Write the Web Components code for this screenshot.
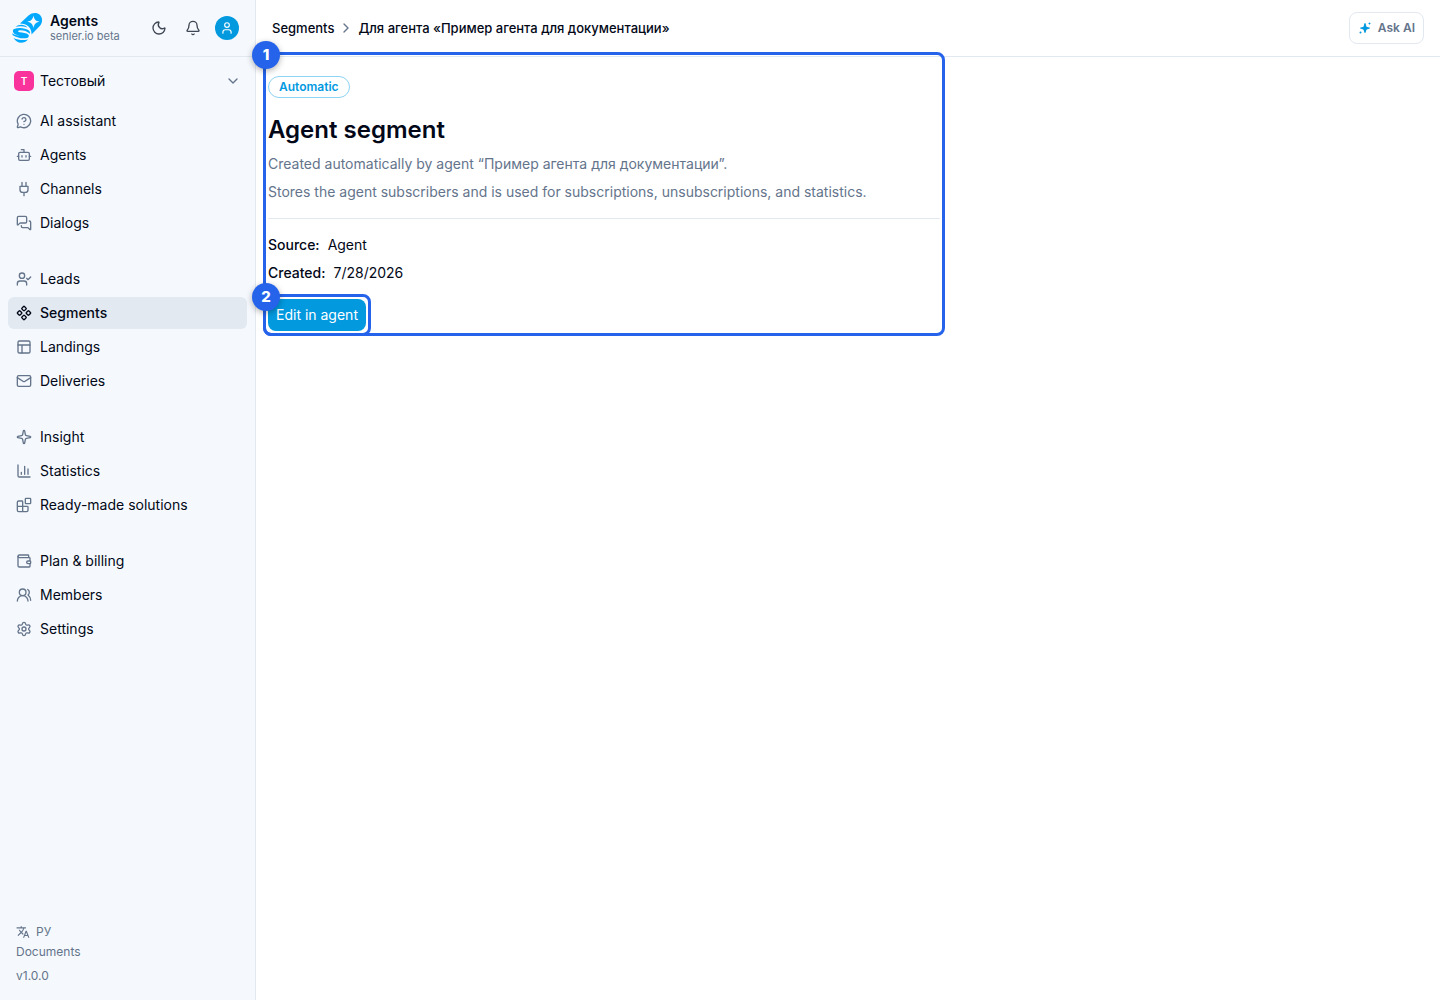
<!DOCTYPE html>
<html lang="en">
<head>
<meta charset="utf-8">
<meta name="viewport" content="width=device-width, initial-scale=1">
<title>Segments</title>
<style>
  :root {
    --ink: #020817;
    --muted: #64748b;
    --line: #e2e8f0;
    --accent: #0299df;
    --side: #f5f9fd;
    --mark: #2563eb;
  }
  body {
    margin: 0;
    font: 14px/20px Inter, "Noto Sans", sans-serif;
    color: var(--ink);
    background: white;
  }
</style>
</head>
<body>
<app-shell>
  <side-bar slot="side"></side-bar>
  <top-bar slot="top"></top-bar>
  <segment-card></segment-card>
</app-shell>

<script>
const ICONS = {
  help: '<path d="M2.992 16.342a2 2 0 0 1 .094 1.167l-1.065 3.29a1 1 0 0 0 1.236 1.168l3.413-.998a2 2 0 0 1 1.099.092 10 10 0 1 0-4.777-4.719"/><path d="M9.09 9a3 3 0 0 1 5.83 1c0 2-3 3-3 3M12 17h.01"/>',
  bot: '<path d="M12 8V4H8"/><rect width="16" height="12" x="4" y="8" rx="2"/><path d="M2 14h2M20 14h2M15 13v2M9 13v2"/>',
  plug: '<path d="M12 22v-5M9 8V2M15 8V2M18 8v5a4 4 0 0 1-4 4h-4a4 4 0 0 1-4-4V8Z"/>',
  dialogs: '<path d="M16 10a2 2 0 0 1-2 2H6.828a2 2 0 0 0-1.414.586l-2.202 2.202A.71.71 0 0 1 2 14.286V4a2 2 0 0 1 2-2h10a2 2 0 0 1 2 2z"/><path d="M20 9a2 2 0 0 1 2 2v10.286a.71.71 0 0 1-1.212.502l-2.202-2.202A2 2 0 0 0 17.172 19H10a2 2 0 0 1-2-2v-1"/>',
  lead: '<path d="m16 11 2 2 4-4M16 21v-2a4 4 0 0 0-4-4H6a4 4 0 0 0-4 4v2"/><circle cx="9" cy="7" r="4"/>',
  segments: '<g id="g"><path d="M15.536 11.293a1 1 0 0 0 0 1.414l2.376 2.377a1 1 0 0 0 1.414 0l2.377-2.377a1 1 0 0 0 0-1.414l-2.377-2.377a1 1 0 0 0-1.414 0z"/></g><use href="#g" transform="rotate(90 12 12)"/><use href="#g" transform="rotate(180 12 12)"/><use href="#g" transform="rotate(270 12 12)"/>',
  layout: '<rect width="18" height="18" x="3" y="3" rx="2"/><path d="M3 9h18M9 21V9"/>',
  mail: '<path d="m22 7-8.991 5.727a2 2 0 0 1-2.009 0L2 7"/><rect width="20" height="16" x="2" y="4" rx="2"/>',
  sparkle: '<path d="M11.017 2.814a1 1 0 0 1 1.966 0l1.051 5.558a2 2 0 0 0 1.594 1.594l5.558 1.051a1 1 0 0 1 0 1.966l-5.558 1.051a2 2 0 0 0-1.594 1.594l-1.051 5.558a1 1 0 0 1-1.966 0l-1.051-5.558a2 2 0 0 0-1.594-1.594l-5.558-1.051a1 1 0 0 1 0-1.966l5.558-1.051a2 2 0 0 0 1.594-1.594z"/>',
  chart: '<path d="M3 3v16a2 2 0 0 0 2 2h16M18 17V9M13 17V5M8 17v-3"/>',
  blocks: '<path d="M10 22V7a1 1 0 0 0-1-1H4a2 2 0 0 0-2 2v12a2 2 0 0 0 2 2h12a2 2 0 0 0 2-2v-5a1 1 0 0 0-1-1H2"/><rect x="14" y="2" width="8" height="8" rx="1"/>',
  wallet: '<path d="M19 7V4a1 1 0 0 0-1-1H5a2 2 0 0 0 0 4h15a1 1 0 0 1 1 1v4h-3a2 2 0 0 0 0 4h3a1 1 0 0 0 1-1v-2a1 1 0 0 0-1-1"/><path d="M3 5v14a2 2 0 0 0 2 2h15a1 1 0 0 0 1-1v-4"/>',
  members: '<path d="M18 21a8 8 0 0 0-16 0"/><circle cx="10" cy="8" r="5"/><path d="M22 20c0-3.37-2-6.5-4-8a5 5 0 0 0-.45-8.3"/>',
  settings: '<path d="M9.671 4.136a2.34 2.34 0 0 1 4.659 0 2.34 2.34 0 0 0 3.319 1.915 2.34 2.34 0 0 1 2.33 4.033 2.34 2.34 0 0 0 0 3.831 2.34 2.34 0 0 1-2.33 4.033 2.34 2.34 0 0 0-3.319 1.915 2.34 2.34 0 0 1-4.659 0 2.34 2.34 0 0 0-3.32-1.915 2.34 2.34 0 0 1-2.33-4.033 2.34 2.34 0 0 0 0-3.831A2.34 2.34 0 0 1 6.35 6.051a2.34 2.34 0 0 0 3.319-1.915"/><circle cx="12" cy="12" r="3"/>',
  moon: '<path d="M20.985 12.486a9 9 0 1 1-9.473-9.472c.405-.022.617.46.402.803a6 6 0 0 0 8.268 8.268c.344-.215.825-.004.803.401"/>',
  bell: '<path d="M10.268 21a2 2 0 0 0 3.464 0M3.262 15.326A1 1 0 0 0 4 17h16a1 1 0 0 0 .74-1.673C19.41 13.956 18 12.499 18 8A6 6 0 0 0 6 8c0 4.499-1.411 5.956-2.738 7.326"/>',
  user: '<path d="M19 21v-2a4 4 0 0 0-4-4H9a4 4 0 0 0-4 4v2"/><circle cx="12" cy="7" r="4"/>',
  down: '<path d="m6 9 6 6 6-6"/>',
  right: '<path d="m9 18 6-6-6-6"/>',
  translate: '<path fill="currentColor" stroke="none" d="M12.87 15.07l-2.54-2.51.03-.03A17.52 17.52 0 0 0 14.07 6H17V4h-7V2H8v2H1v2h11.17C11.5 7.92 10.44 9.75 9 11.35 8.07 10.32 7.3 9.19 6.69 8h-2c.73 1.63 1.73 3.17 2.98 4.56l-5.09 5.02L4 19l5-5 3.11 3.11.76-2.04zM18.5 10h-2L12 22h2l1.12-3h4.75L21 22h2l-4.5-12zm-2.62 7l1.62-4.33L19.12 17h-3.24z"/>',
  ai: '<g fill="currentColor" stroke="none"><path d="M12 2q1 0 1.400 1.500L14.500 8q.4 1.500 2 2l4 1q1.500.4 1.500 1.200t-1.500 1.200l-4 1q-1.600.5-2 2l-1.100 4.100Q13 22 12 22t-1.400-1.500l-1.100-4.100q-.4-1.500-2-2l-4-1Q2 13 2 12.200T3.500 11l4-1q1.600-.5 2-2l1.100-4.500Q11 2 12 2z"/><path d="m21 0 .8 2.200L24 3l-2.200.8L21 6l-.8-2.200L18 3l2.200-.8z"/><circle cx="3" cy="21" r="2"/></g>'
};

// <ui-icon name="bell" size="16">
class UiIcon extends HTMLElement {
  constructor() {
    super();
    this.attachShadow({ mode: "open" });
  }

  connectedCallback() {
    const size = this.getAttribute("size") || 16;
    this.shadowRoot.innerHTML = `
      <style>
        :host { display: block; flex: none; }
        svg { display: block; }
      </style>
      <svg width="${size}" height="${size}" viewBox="0 0 24 24" fill="none" stroke="currentColor"
        stroke-width="2" stroke-linecap="round" stroke-linejoin="round" aria-hidden="true">${ICONS[this.getAttribute("name")]}</svg>
    `;
  }
}

class AppShell extends HTMLElement {
  constructor() {
    super();
    this.attachShadow({ mode: "open" });
    this.shadowRoot.innerHTML = `
      <style>
        :host {
          display: grid;
          grid-template-columns: 256px minmax(0, 1fr);
          min-height: 100vh;
        }
        .page { display: flex; flex-direction: column; }
        main { padding: 0 12px; }
      </style>
      <slot name="side"></slot>
      <div class="page">
        <slot name="top"></slot>
        <main><slot></slot></main>
      </div>
    `;
  }
}

class NavItem extends HTMLElement {
  constructor() {
    super();
    this.attachShadow({ mode: "open" });
  }

  connectedCallback() {
    this.shadowRoot.innerHTML = `
      <style>
        :host { display: block; }
        a {
          display: flex;
          align-items: center;
          gap: 8px;
          height: 32px;
          padding: 0 8px;
          border-radius: 6px;
          color: var(--ink);
          text-decoration: none;
        }
        ui-icon { color: var(--muted); }
        :host([active]) a { background: #e2e9f1; font-weight: 500; }
        :host([active]) ui-icon { color: inherit; }
      </style>
      <a href="#"><ui-icon name="${this.getAttribute("icon")}"></ui-icon><slot></slot></a>
    `;
  }
}

class BrandLogo extends HTMLElement {
  constructor() {
    super();
    this.attachShadow({ mode: "open" });
    this.shadowRoot.innerHTML = `
      <style>
        :host { display: block; flex: none; }
        svg { display: block; }
      </style>
      <svg width="30" height="30" viewBox="0 0 30 30" aria-hidden="true">
        <path fill="#03a9ff" d="M8 10.500 16.500 2.500C20-.5 25-.8 28 2s2.500 8-.2 11L19.500 21.500C20 15 15 10.500 8 10.500z"/>
        <path fill="#f5f9fd" d="M21.500 2.500c.8 4 2 5.300 6 6.200-4 .9-5.200 2.200-6 6.200-.9-4-2.200-5.300-6.200-6.200 4-.9 5.300-2.200 6.200-6.200z"/>
        <circle cx="9" cy="21" r="10" fill="#f5f9fd"/>
        <path fill="#03a9ff" d="M3.500 13.800C7 11 12.500 11 15.500 14.500c-4-1.500-8-1.700-12-.7z"/>
        <path fill="#03a9ff" d="M1.500 16.300c5-2 11.500-1.500 15.800 1.500.6 1 .8 2 .7 3-3-2.600-6-3.600-9.500-3.600-2.500 0-3.500 1.400-.8 2 2.800.5 6.800.6 8.500 2.300 1.300 1.400.5 3-1.200 3.500-4.500 1-10-.2-14.200-2.800L0 20.300c2.500 1.700 5 2.400 8.300 2.600-3.300-.8-6.500-1.800-7.300-3.900-.3-1-.1-1.900.5-2.700z"/>
        <path fill="#03a9ff" d="M1.500 25c4.500 2 9.500 2.600 14.500 1.500-4 4.500-11 4.500-14.500-1.500z"/>
      </svg>
    `;
  }
}

class SideBar extends HTMLElement {
  constructor() {
    super();
    this.attachShadow({ mode: "open" });
    this.shadowRoot.innerHTML = `
      <style>
        :host {
          display: flex;
          flex-direction: column;
          background: var(--side);
          border-right: 1px solid var(--line);
        }
        button {
          font: inherit;
          color: inherit;
          background: none;
          border: 0;
          padding: 0;
          cursor: pointer;
        }
        header {
          display: flex;
          align-items: center;
          height: 56px;
          padding: 0 16px 0 12px;
          border-bottom: 1px solid var(--line);
        }
        .brand { flex: 1; margin-left: 8px; line-height: 16px; }
        .brand strong { display: block; font-weight: 600; }
        .brand small { display: block; font-size: 11px; line-height: 14px; color: var(--muted); }
        .tools { display: flex; align-items: center; gap: 10px; color: #3f4654; }
        .tools button { display: grid; place-items: center; width: 24px; height: 24px; }
        .tools .avatar {
          border-radius: 50%;
          background: var(--accent);
          color: white;
        }
        .space {
          display: flex;
          align-items: center;
          gap: 6px;
          height: 32px;
          margin: 8px 8px 0;
          padding: 0 6px;
          text-align: left;
        }
        .space span { flex: 1; }
        .space i {
          width: 20px;
          border-radius: 5px;
          background: #f9339b;
          color: white;
          font-size: 10px;
          font-style: normal;
          font-weight: 600;
          text-align: center;
        }
        .space ui-icon { color: var(--muted); }
        nav { display: flex; flex-direction: column; gap: 24px; padding: 8px; }
        .group { display: grid; gap: 2px; }
        footer {
          display: flex;
          flex-direction: column;
          align-items: flex-start;
          margin-top: auto;
          padding: 0 16px 14px;
          font-size: 12px;
          color: var(--muted);
        }
        .lang { display: flex; align-items: center; gap: 6px; }
        footer a { color: inherit; text-decoration: none; margin-bottom: 4px; }
      </style>
      <header>
        <brand-logo></brand-logo>
        <div class="brand"><strong>Agents</strong><small>senler.io beta</small></div>
        <div class="tools">
          <button aria-label="Theme"><ui-icon name="moon"></ui-icon></button>
          <button aria-label="Notifications"><ui-icon name="bell"></ui-icon></button>
          <button class="avatar" aria-label="Profile"><ui-icon name="user" size="14"></ui-icon></button>
        </div>
      </header>
      <button class="space"><i>T</i><span>Тестовый</span><ui-icon name="down"></ui-icon></button>
      <nav>
        <div class="group">
          <nav-item icon="help">AI assistant</nav-item>
          <nav-item icon="bot">Agents</nav-item>
          <nav-item icon="plug">Channels</nav-item>
          <nav-item icon="dialogs">Dialogs</nav-item>
        </div>
        <div class="group">
          <nav-item icon="lead">Leads</nav-item>
          <nav-item icon="segments" active>Segments</nav-item>
          <nav-item icon="layout">Landings</nav-item>
          <nav-item icon="mail">Deliveries</nav-item>
        </div>
        <div class="group">
          <nav-item icon="sparkle">Insight</nav-item>
          <nav-item icon="chart">Statistics</nav-item>
          <nav-item icon="blocks">Ready-made solutions</nav-item>
        </div>
        <div class="group">
          <nav-item icon="wallet">Plan &amp; billing</nav-item>
          <nav-item icon="members">Members</nav-item>
          <nav-item icon="settings">Settings</nav-item>
        </div>
      </nav>
      <footer>
        <button class="lang"><ui-icon name="translate" size="14"></ui-icon>РУ</button>
        <a href="#">Documents</a>
        <span>v1.0.0</span>
      </footer>
    `;
  }
}

class TopBar extends HTMLElement {
  constructor() {
    super();
    this.attachShadow({ mode: "open" });
    this.shadowRoot.innerHTML = `
      <style>
        :host {
          display: flex;
          align-items: center;
          justify-content: space-between;
          height: 56px;
          padding: 0 16px;
          border-bottom: 1px solid var(--line);
          font-size: 13px;
          font-weight: 500;
        }
        nav { display: flex; align-items: center; gap: 4px; }
        nav a { color: inherit; text-decoration: none; }
        nav ui-icon { color: var(--muted); }
        button {
          display: flex;
          align-items: center;
          gap: 6px;
          height: 32px;
          padding: 0 8px;
          border: 1px solid var(--line);
          border-radius: 8px;
          background: white;
          color: var(--muted);
          font: inherit;
          font-size: 12px;
          font-weight: 600;
          cursor: pointer;
        }
        button ui-icon { color: var(--accent); padding: 0 1px; }
      </style>
      <nav aria-label="Breadcrumb">
        <a href="#">Segments</a>
        <ui-icon name="right"></ui-icon>
        <span>Для агента «Пример агента для документации»</span>
      </nav>
      <button><ui-icon name="ai" size="12"></ui-icon>Ask AI</button>
    `;
  }
}

// Numbered frame drawn around whatever is slotted in.
// The frame comes before the slot so a nested call-out stays on top.
class CallOut extends HTMLElement {
  constructor() {
    super();
    this.attachShadow({ mode: "open" });
  }

  connectedCallback() {
    this.shadowRoot.innerHTML = `
      <style>
        :host { display: block; position: relative; }
        .frame {
          position: absolute;
          inset: -5px;
          border: 3px solid var(--mark);
          border-radius: 8px;
          pointer-events: none;
        }
        .num {
          position: absolute;
          top: -14px;
          left: -14px;
          width: 28px;
          border-radius: 50%;
          background: var(--mark);
          box-shadow: 0 2px 6px rgba(0,0,0,0.3);
          color: white;
          font-size: 15px;
          font-weight: 800;
          line-height: 28px;
          text-align: center;
        }
      </style>
      <div class="frame"><span class="num">${this.getAttribute("num")}</span></div>
      <slot></slot>
    `;
  }
}

class SegmentCard extends HTMLElement {
  constructor() {
    super();
    this.attachShadow({ mode: "open" });
    this.shadowRoot.innerHTML = `
      <style>
        :host { display: block; max-width: 672px; line-height: 28px; }
        .body { padding-top: 19px; }
        .badge {
          display: block;
          width: fit-content;
          padding: 0 10px;
          border: 1px solid #8dd3f2;
          border-radius: 11px;
          color: var(--accent);
          font-size: 12px;
          font-weight: 600;
          line-height: 20px;
        }
        h1 { margin: 16px 0 4px; font-size: 24px; font-weight: 600; line-height: 32px; }
        p { margin: 0; color: var(--muted); }
        hr { margin: 12px 0; border: 0; border-top: 1px solid var(--line); }
        dl { margin: 0 0 12px; }
        dl div { display: flex; gap: 8px; }
        dt { font-weight: 500; }
        dd { margin: 0; }
        call-out call-out { width: fit-content; }
        button {
          display: block;
          height: 32px;
          padding: 0 8px;
          border: 0;
          border-radius: 8px;
          background: var(--accent);
          color: white;
          font: inherit;
          cursor: pointer;
        }
      </style>
      <call-out num="1">
        <div class="body">
          <span class="badge">Automatic</span>
          <h1>Agent segment</h1>
          <p>Created automatically by agent “Пример агента для документации”.</p>
          <p>Stores the agent subscribers and is used for subscriptions, unsubscriptions, and statistics.</p>
          <hr>
          <dl>
            <div><dt>Source:</dt><dd>Agent</dd></div>
            <div><dt>Created:</dt><dd>7/28/2026</dd></div>
          </dl>
          <call-out num="2"><button>Edit in agent</button></call-out>
        </div>
      </call-out>
    `;
  }
}

customElements.define("ui-icon", UiIcon);
customElements.define("brand-logo", BrandLogo);
customElements.define("nav-item", NavItem);
customElements.define("call-out", CallOut);
customElements.define("side-bar", SideBar);
customElements.define("top-bar", TopBar);
customElements.define("segment-card", SegmentCard);
customElements.define("app-shell", AppShell);
</script>
</body>
</html>
